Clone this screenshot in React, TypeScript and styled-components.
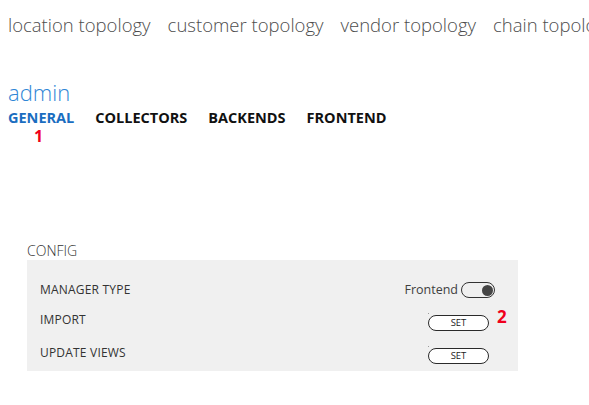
import styled, { createGlobalStyle } from "styled-components";

const GlobalStyle = createGlobalStyle`
  html, body {
    margin: 0;
    padding: 0;
    background: #ffffff;
  }
  body {
    font-family: "Open Sans", "Noto Sans", "Liberation Sans", sans-serif;
    color: #333333;
  }
`;

const Page = styled.div`
  width: 589px;
  height: 405px;
  overflow: hidden;
  padding: 0 0 0 8px;
  box-sizing: border-box;
`;

const TopNav = styled.nav`
  display: flex;
  gap: 17px;
  padding-top: 12px;
  white-space: nowrap;
  font-size: 18.5px;
  font-weight: 300;
  line-height: 26px;
  color: #4d4d4d;
`;

const NavItem = styled.span`
  flex: none;
`;

const Title = styled.h1`
  margin: 40px 0 0;
  font-size: 22px;
  font-weight: 300;
  line-height: 28px;
  color: #2f86d6;
`;

const Tabs = styled.div`
  display: flex;
  gap: 21px;
  margin-top: 2px;
`;

const Tab = styled.span<{ $active?: boolean }>`
  font-size: 14.5px;
  font-weight: 700;
  line-height: 19px;
  color: ${({ $active }) => ($active ? "#1a6dc0" : "#111111")};
`;

const Marker = styled.div`
  margin-top: 1px;
  padding-left: 26px;
  font-size: 16px;
  font-weight: 700;
  line-height: 16px;
  color: #f0001c;
`;

const Section = styled.section`
  width: 491px;
  margin: 98px 0 0 19px;
`;

const SectionLabel = styled.div`
  font-size: 14px;
  font-weight: 300;
  line-height: 18px;
  color: #333333;
`;

const Panel = styled.div`
  background: #f0f0f0;
  padding: 14px 23px 0 13px;
  height: 111px;
  box-sizing: border-box;
`;

const Row = styled.div<{ $h: number }>`
  display: flex;
  align-items: center;
  justify-content: space-between;
  height: ${({ $h }) => $h}px;
`;

const RowLabel = styled.span`
  font-size: 12px;
  line-height: 16px;
  letter-spacing: 0.2px;
  color: #333333;
`;

const Control = styled.div`
  display: flex;
  align-items: center;
  gap: 3px;
`;

const ToggleText = styled.span`
  font-size: 12.5px;
  line-height: 16px;
  color: #404040;
`;

const Toggle = styled.span<{ $on?: boolean }>`
  display: flex;
  align-items: center;
  justify-content: ${({ $on }) => ($on ? "flex-end" : "flex-start")};
  width: 34px;
  height: 16px;
  box-sizing: border-box;
  border: 1.5px solid #333333;
  border-radius: 8px;
  padding: 0 1.5px;

  &::after {
    content: "";
    width: 11px;
    height: 11px;
    border-radius: 50%;
    background: #454545;
  }
`;

const SetWrap = styled.div`
  position: relative;
  margin-right: 6px;
`;

const SetButton = styled.button`
  position: relative;
  width: 61px;
  height: 16px;
  box-sizing: border-box;
  border: 1.5px solid #2a2a2a;
  border-radius: 8px;
  background: #ffffff;
  padding: 0;
  font-family: "Open Sans", "Noto Sans", sans-serif;
  font-size: 9.5px;
  line-height: 12px;
  color: #222222;

  &::before {
    content: "";
    position: absolute;
    left: -1px;
    top: -3px;
    width: 1px;
    height: 1px;
    background: #9a9a9a;
  }
`;

const Badge = styled.span`
  position: absolute;
  left: calc(100% + 8px);
  top: -2px;
  font-size: 17px;
  font-weight: 700;
  line-height: 20px;
  color: #f0001c;
`;

export default function App() {
  return (
    <Page>
      <GlobalStyle />
      <TopNav>
        <NavItem>location topology</NavItem>
        <NavItem>customer topology</NavItem>
        <NavItem>vendor topology</NavItem>
        <NavItem>chain topology</NavItem>
      </TopNav>
      <Title>admin</Title>
      <Tabs>
        <Tab $active>GENERAL</Tab>
        <Tab>COLLECTORS</Tab>
        <Tab>BACKENDS</Tab>
        <Tab>FRONTEND</Tab>
      </Tabs>
      <Marker>1</Marker>
      <Section>
        <SectionLabel>CONFIG</SectionLabel>
        <Panel>
          <Row $h={32}>
            <RowLabel>MANAGER TYPE</RowLabel>
            <Control>
              <ToggleText>Frontend</ToggleText>
              <Toggle $on />
            </Control>
          </Row>
          <Row $h={28}>
            <RowLabel>IMPORT</RowLabel>
            <SetWrap>
              <SetButton>SET</SetButton>
              <Badge>2</Badge>
            </SetWrap>
          </Row>
          <Row $h={37}>
            <RowLabel>UPDATE VIEWS</RowLabel>
            <SetWrap>
              <SetButton>SET</SetButton>
            </SetWrap>
          </Row>
        </Panel>
      </Section>
    </Page>
  );
}
